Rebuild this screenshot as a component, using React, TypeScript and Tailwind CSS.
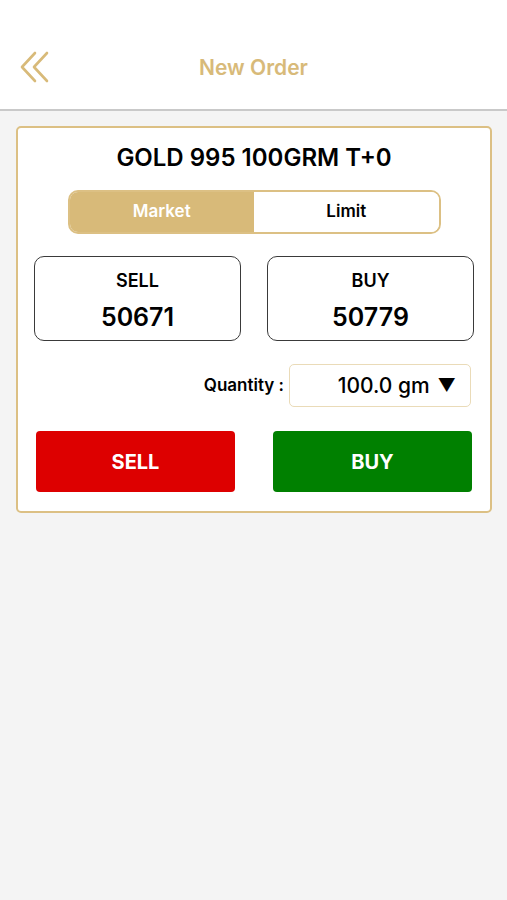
import React from "react";

export default function App() {
  return (
    <div className="min-h-[900px] w-[507px] bg-[#f4f4f4] font-['Inter','Liberation_Sans',sans-serif]">
      <header className="relative flex h-[111px] items-center justify-center border-b-2 border-[#c9c9c9] bg-white pt-[27px]">
        <svg
          className="absolute left-[19px] top-[51px]"
          width="32"
          height="33"
          viewBox="0 0 32 33"
          fill="none"
          stroke="#d8ba79"
          strokeWidth="2.6"
          strokeLinecap="round"
          strokeLinejoin="round"
        >
          <path d="M16 2 L3 16 L16 30" />
          <path d="M28 2 L15 16 L28 30" />
        </svg>
        <span className="text-[21px] font-semibold text-[#d8ba79]">New Order</span>
      </header>

      <div className="pl-[16px] pr-[15px] pt-[15px]">
        <div className="rounded-[5px] border-2 border-[#dcc084] bg-white px-[16px] pb-[19px] pt-[14px]">
          <div className="text-center text-[24px] font-semibold leading-[32px] text-black">GOLD 995 100GRM T+0</div>

          <div className="mx-auto mt-[16px] flex h-[44px] w-[373px] overflow-hidden rounded-[10px] border-2 border-[#dcc084]">
            <div className="flex flex-1 items-center justify-center bg-[#d8ba79] text-[17px] font-semibold text-white">Market</div>
            <div className="flex flex-1 items-center justify-center bg-white text-[17px] font-semibold text-black">Limit</div>
          </div>

          <div className="mt-[22px] flex justify-between">
            <div className="flex h-[85px] w-[207px] flex-col items-center justify-center rounded-[10px] border-[1.5px] border-[#3a3a3a]">
              <div className="mt-[2px] text-[18px] font-semibold leading-[24px] text-black">SELL</div>
              <div className="mt-[10px] text-[25px] font-semibold leading-[28px] text-black">50671</div>
            </div>
            <div className="flex h-[85px] w-[207px] flex-col items-center justify-center rounded-[10px] border-[1.5px] border-[#3a3a3a]">
              <div className="mt-[2px] text-[18px] font-semibold leading-[24px] text-black">BUY</div>
              <div className="mt-[10px] text-[25px] font-semibold leading-[28px] text-black">50779</div>
            </div>
          </div>

          <div className="mt-[23px] flex items-center justify-end pr-[3px]">
            <span className="mr-[5px] text-[17px] font-semibold text-black">Quantity :</span>
            <div className="flex h-[43px] w-[182px] items-center justify-end rounded-[5px] border border-[#eadbb8] pr-[14px] text-[21px] font-medium text-black">
              100.0 gm <span className="ml-[8px] text-[18px]">▼</span>
            </div>
          </div>

          <div className="mt-[24px] flex justify-between pl-[2px] pr-[2px]">
            <button className="flex h-[61px] w-[199px] items-center justify-center rounded-[4px] bg-[#dd0000] text-[20px] font-bold text-white">SELL</button>
            <button className="flex h-[61px] w-[199px] items-center justify-center rounded-[4px] bg-[#008000] text-[20px] font-bold text-white">BUY</button>
          </div>
        </div>
      </div>
    </div>
  );
}
